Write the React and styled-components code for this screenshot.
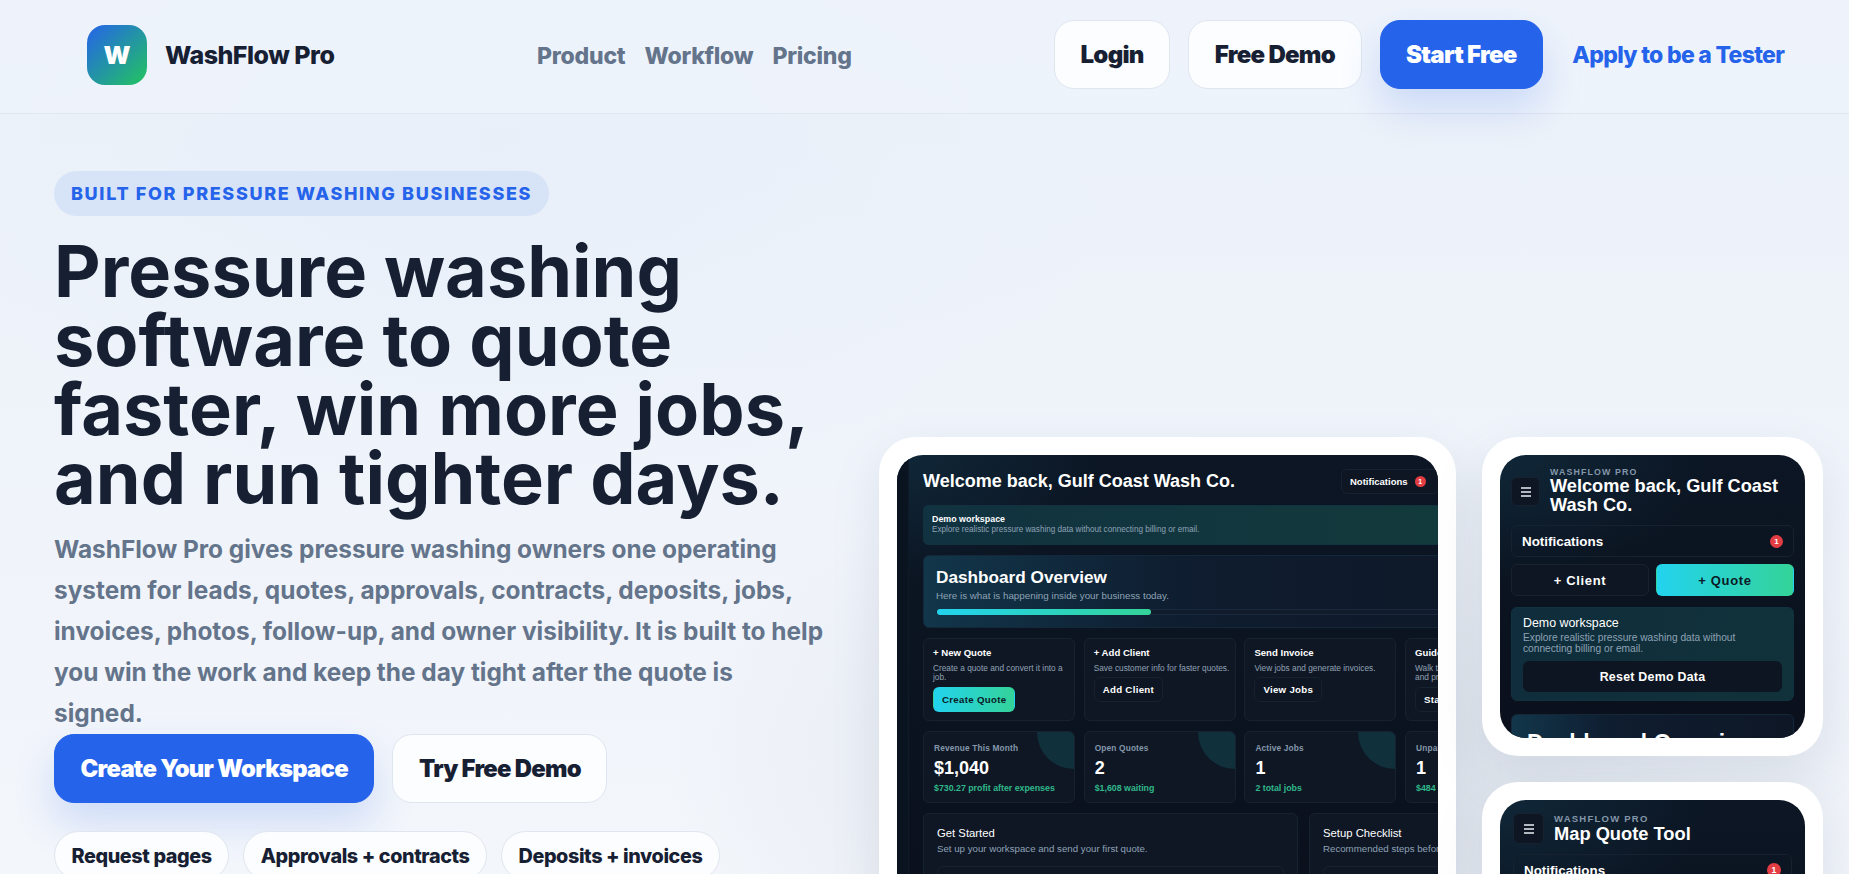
import * as React from 'react'
import styled, { createGlobalStyle } from 'styled-components'

const Global = createGlobalStyle`
  html, body { margin: 0; padding: 0; height: 100%; overflow: hidden; }
  body {
    font-family: Inter, "Noto Sans", sans-serif;
    background: #eef3f9;
    color: #172033;
  }
  * { box-sizing: border-box; }
`

const Page = styled.div`
  height: 874px;
  overflow: hidden;
  background:
    radial-gradient(900px 500px at 1300px 780px, rgba(200, 208, 220, 0.55), transparent 70%),
    radial-gradient(900px 500px at 500px 150px, rgba(215, 229, 250, 0.2), transparent 70%),
    linear-gradient(180deg, #ebf1f9 0%, #f3f6fb 100%);
`

const Header = styled.header`
  height: 114px;
  padding: 20px 64px 0 87px;
  display: flex;
  align-items: flex-start;
  border-bottom: 1px solid #dfe6ef;
  background: rgba(240, 245, 251, 0.6);
`

const Brand = styled.div`
  display: flex;
  align-items: center;
  gap: 18px;
  width: 450px;
  padding-top: 5px;
`

const LogoMark = styled.div`
  width: 60px;
  height: 60px;
  border-radius: 18px;
  background: linear-gradient(135deg, #2563eb, #22c55e);
  color: #fff;
  font-weight: 900;
  font-size: 25px;
  display: flex;
  align-items: center;
  justify-content: center;
`

const BrandName = styled.span`
  font-size: 25px;
  font-weight: 800;
  letter-spacing: -0.02em;
`

const Nav = styled.nav`
  display: flex;
  gap: 19px;
  width: 517px;
  padding-top: 22px;
`

const NavLink = styled.a`
  font-size: 23px;
  font-weight: 800;
  letter-spacing: -0.01em;
  color: #64748b;
`

const HeaderActions = styled.div`
  display: flex;
  align-items: center;
  gap: 18px;
`

const Button = styled.a`
  display: inline-flex;
  align-items: center;
  justify-content: center;
  height: 69px;
  padding: 0 25.5px;
  border-radius: 20px;
  font-size: ${p => (p.$large ? 23.8 : 24)}px;
  font-weight: 900;
  letter-spacing: -0.03em;
  white-space: nowrap;
  color: ${p => (p.$primary ? '#fff' : '#172033')};
  background: ${p => (p.$primary ? '#2563eb' : '#fbfdff')};
  border: 1px solid ${p => (p.$primary ? '#2563eb' : '#e0e6ef')};
  box-shadow: ${p => (p.$primary ? '0 20px 40px rgba(37, 99, 235, 0.18)' : 'none')};
`

const TesterLink = styled.a`
  margin-left: 11px;
  font-size: 23px;
  font-weight: 800;
  letter-spacing: -0.03em;
  color: #2563eb;
  white-space: nowrap;
`

const Hero = styled.main`
  display: grid;
  grid-template-columns: 825px 944px;
  padding: 57px 0 0 54px;
`

const Copy = styled.section`
  display: flex;
  flex-direction: column;
  align-items: flex-start;
`

const Eyebrow = styled.div`
  height: 45px;
  padding: 0 17px;
  display: flex;
  align-items: center;
  border-radius: 23px;
  background: #d7e3f7;
  color: #2563eb;
  font-size: 18px;
  font-weight: 800;
  letter-spacing: 0.092em;
`

const Title = styled.h1`
  margin: 20px 0 0;
  font-size: 72px;
  line-height: 69px;
  font-weight: 700;
  letter-spacing: 0;
  color: #172033;
`

const Lead = styled.p`
  margin: 17px 0 0;
  width: 770px;
  font-size: 24.4px;
  line-height: 41px;
  font-weight: 700;
  color: #64748b;
`

const CtaRow = styled.div`
  display: flex;
  gap: 18px;
`

const Chips = styled.div`
  display: flex;
  gap: 14px;
  margin-top: 28px;
`

const Chip = styled.span`
  height: 49px;
  padding: 0 16.5px;
  display: inline-flex;
  align-items: center;
  border-radius: 27px;
  background: #fbfdff;
  border: 1px solid #e0e6ef;
  font-size: 19.8px;
  font-weight: 800;
  letter-spacing: -0.02em;
  white-space: nowrap;
`

const Showcase = styled.section`
  display: grid;
  grid-template-columns: 577px 341px;
  gap: 26px;
  align-items: start;
  padding-top: 266px;
`

const PhoneColumn = styled.div`
  display: flex;
  flex-direction: column;
  gap: 26px;
`

const Frame = styled.div`
  background: #fff;
  border-radius: 36px;
  padding: 18px;
  box-shadow: 0 20px 50px rgba(100, 116, 139, 0.14);
`

const Screen = styled.div`
  height: ${p => p.$h}px;
  border-radius: 26px;
  overflow: hidden;
  color: #fff;
  font-family: "Liberation Sans", Arial, sans-serif;
  background:
    radial-gradient(260px 160px at 0 0, rgba(20, 60, 80, 0.45), transparent 80%),
    linear-gradient(180deg, #0c1624, #0a101c);
`

const DesktopShell = styled.div`
  display: flex;
  width: 700px;
`

const Rail = styled.div`
  width: 12px;
  height: 600px;
  background: #0a1420;
  border-right: 1px solid #0e1a28;
  margin-right: 14px;
  flex: none;
`

const DeskMain = styled.div`
  width: 640px;
  padding-top: 15px;
  flex: none;
`

const DeskTop = styled.div`
  width: 516px;
  height: 22px;
  display: flex;
  align-items: center;
  justify-content: space-between;
`

const DeskTitle = styled.div`
  font-size: 18px;
  font-weight: 700;
  white-space: nowrap;
`

const NotifPill = styled.div`
  width: 98px;
  height: 25px;
  padding-left: 8px;
  display: flex;
  align-items: center;
  gap: 7px;
  border: 1px solid #172231;
  border-radius: 6px;
  background: #0e1623;
  font-size: 9.5px;
  font-weight: 700;
  flex: none;
`

const Badge = styled.span`
  width: ${p => p.$size}px;
  height: ${p => p.$size}px;
  border-radius: 50%;
  background: #e23d42;
  color: #fff;
  font-size: ${p => p.$size * 0.62}px;
  font-weight: 700;
  display: inline-flex;
  align-items: center;
  justify-content: center;
  flex: none;
`

const DemoBanner = styled.div`
  margin-top: 13px;
  height: 40px;
  padding: 8px 8px;
  border-radius: 5px;
  border: 1px solid #123240;
  background: linear-gradient(90deg, #113240, #12383d 60%, #123a3a);
`

const DemoTitle = styled.div`
  font-size: 8.9px;
  font-weight: 700;
  line-height: 11px;
`

const DemoText = styled.div`
  font-size: 8.15px;
  line-height: 10px;
  color: #8ea2b5;
  white-space: nowrap;
`

const Overview = styled.div`
  margin-top: 10px;
  height: 73px;
  padding: 12px 12px;
  border-radius: 6px;
  border: 1px solid #14283a;
  background: linear-gradient(90deg, #12364a, #0f1d30 40%, #0e1726);
`

const OverviewTitle = styled.div`
  font-size: 17.2px;
  line-height: 19px;
  font-weight: 700;
  white-space: nowrap;
`

const OverviewText = styled.div`
  font-size: 9.8px;
  line-height: 13px;
  margin-top: 2px;
  color: #8ea2b5;
  white-space: nowrap;
`

const Track = styled.div`
  margin-top: 7px;
  height: 6px;
  border-radius: 3px;
  background: #101c2c;
  border: 1px solid #1a2a3c;
`

const Fill = styled.div`
  height: 6px;
  margin-top: -1px;
  border-radius: 3px;
  background: linear-gradient(90deg, #22d3ee, #34d399);
`

const TileGrid = styled.div`
  display: grid;
  grid-template-columns: repeat(4, 152px);
  gap: 10px 8.7px;
  margin-top: 10px;
`

const Tile = styled.div`
  position: relative;
  overflow: hidden;
  height: ${p => p.$h}px;
  padding: ${p => p.$pad};
  border: 1px solid #172231;
  border-radius: 6px;
  background: #0f1725;
`

const TileTitle = styled.div`
  font-size: 9.6px;
  line-height: 11px;
  font-weight: 700;
  white-space: nowrap;
`

const TileText = styled.div`
  font-size: 8.3px;
  line-height: 9.3px;
  margin-top: 6px;
  color: #91a2b4;
`

const TileButton = styled.div`
  display: inline-flex;
  align-items: center;
  height: 25px;
  padding: 0 8px;
  margin-top: 4px;
  border-radius: 6px;
  font-size: 9.7px;
  font-weight: 700;
  letter-spacing: 0.03em;
  white-space: nowrap;
  color: ${p => (p.$accent ? '#0b1a26' : '#fff')};
  background: ${p => (p.$accent ? 'linear-gradient(90deg, #22d3ee, #34d399)' : '#0e1623')};
  border: 1px solid ${p => (p.$accent ? 'transparent' : '#172231')};
`

const StatLabel = styled.div`
  font-size: 8.3px;
  line-height: 10px;
  font-weight: 700;
  letter-spacing: 0.02em;
  color: #8497aa;
  white-space: nowrap;
`

const StatValue = styled.div`
  font-size: 18px;
  line-height: 20px;
  margin-top: 5px;
  font-weight: 700;
`

const StatNote = styled.div`
  font-size: 8.8px;
  line-height: 10px;
  margin-top: 5px;
  font-weight: 700;
  color: #2fb98a;
  white-space: nowrap;
`

const Blob = styled.div`
  position: absolute;
  top: -37px;
  right: -37px;
  width: 74px;
  height: 74px;
  border-radius: 50%;
  background: #10303b;
`

const PanelRow = styled.div`
  display: grid;
  grid-template-columns: 375px 330px;
  gap: 11px;
  margin-top: 10px;
`

const Panel = styled.div`
  height: 120px;
  padding: 12px 13px;
  border: 1px solid #172231;
  border-radius: 6px;
  background: #0f1725;
`

const PanelTitle = styled.div`
  font-size: 11.3px;
  line-height: 14px;
  font-weight: 500;
`

const PanelText = styled.div`
  font-size: 9.7px;
  line-height: 12px;
  margin-top: 3px;
  color: #8ea2b5;
  white-space: nowrap;
`

const PanelBox = styled.div`
  position: relative;
  margin-top: 11px;
  height: 60px;
  border: 1px solid #172231;
  border-radius: 6px;
`

const PanelAction = styled.div`
  position: absolute;
  top: 8px;
  right: 13px;
  width: 58px;
  height: 24px;
  border-radius: 4px;
  background: #1f8f94;
`

const PhoneBody = styled.div`
  padding: ${p => p.$pad};
`

const PhoneHead = styled.div`
  display: flex;
  align-items: center;
  gap: 10px;
`

const MenuBox = styled.div`
  width: ${p => p.$size}px;
  height: ${p => p.$size}px;
  flex: none;
  border: 1px solid #172231;
  border-radius: 6px;
  background: #0e1623;
  display: flex;
  align-items: center;
  justify-content: center;
`

const Kicker = styled.div`
  font-size: ${p => p.$size}px;
  line-height: 9px;
  font-weight: 700;
  letter-spacing: 0.13em;
  color: #8497aa;
  white-space: nowrap;
`

const PhoneTitle = styled.div`
  font-size: ${p => p.$size}px;
  line-height: 19px;
  font-weight: 700;
  margin-top: ${p => p.$mt}px;
`

const NotifRow = styled.div`
  margin-top: ${p => p.$mt}px;
  height: 32px;
  padding: 0 10px;
  display: flex;
  align-items: center;
  justify-content: space-between;
  border: 1px solid #172231;
  border-radius: 6px;
  font-size: 13.4px;
  font-weight: 700;
`

const QuickRow = styled.div`
  display: grid;
  grid-template-columns: 1fr 1fr;
  gap: 7px;
  margin-top: 7px;
`

const QuickButton = styled.div`
  height: 32px;
  display: flex;
  align-items: center;
  justify-content: center;
  border-radius: 6px;
  font-size: 13px;
  font-weight: 700;
  letter-spacing: 0.05em;
  color: ${p => (p.$accent ? '#0b1a26' : '#fff')};
  background: ${p => (p.$accent ? 'linear-gradient(90deg, #22d3ee, #34d399)' : '#0e1623')};
  border: 1px solid ${p => (p.$accent ? 'transparent' : '#172231')};
`

const PhoneDemo = styled.div`
  margin-top: 11px;
  height: 94px;
  padding: 9px 11px;
  border-radius: 6px;
  border: 1px solid #123240;
  background: linear-gradient(100deg, #0f2d3c, #11323a);
`

const PhoneDemoTitle = styled.div`
  font-size: 12.4px;
  line-height: 13px;
  font-weight: 500;
`

const PhoneDemoText = styled.div`
  font-size: 10.2px;
  line-height: 11.2px;
  margin-top: 2px;
  color: #8ea2b5;
`

const ResetButton = styled.div`
  margin-top: 7px;
  height: 31px;
  display: flex;
  align-items: center;
  justify-content: center;
  border-radius: 6px;
  background: #0e1522;
  font-size: 12.4px;
  font-weight: 700;
  letter-spacing: 0.02em;
`

const PhoneOverview = styled.div`
  margin-top: 13px;
  height: 60px;
  padding: 16px 15px 0;
  border-radius: 6px;
  border: 1px solid #14283a;
  background: linear-gradient(90deg, #12364a, #0f1d30 35%, #0e1726);
  font-size: 23px;
  line-height: 24px;
  font-weight: 700;
  white-space: nowrap;
`

const Burger = () => (
  <svg width="12" height="12" viewBox="0 0 12 12" fill="none" stroke="#e8eef5" strokeWidth="1.4">
    <path d="M1 2h10M1 6h10M1 10h10" />
  </svg>
)

const tiles = [
  { title: '+ New Quote', text: 'Create a quote and convert it into a job.', btn: 'Create Quote', accent: true },
  { title: '+ Add Client', text: 'Save customer info for faster quotes.', btn: 'Add Client' },
  { title: 'Send Invoice', text: 'View jobs and generate invoices.', btn: 'View Jobs' },
  { title: 'Guided Setup', text: 'Walk through your business setup and pricing.', btn: 'Start' },
]

const stats = [
  { label: 'Revenue This Month', value: '$1,040', note: '$730.27 profit after expenses' },
  { label: 'Open Quotes', value: '2', note: '$1,608 waiting' },
  { label: 'Active Jobs', value: '1', note: '2 total jobs' },
  { label: 'Unpaid Invoices', value: '1', note: '$484 unpaid' },
]

export default function App() {
  return (
    <Page>
      <Global />
      <Header>
        <Brand>
          <LogoMark>W</LogoMark>
          <BrandName>WashFlow Pro</BrandName>
        </Brand>
        <Nav>
          <NavLink>Product</NavLink>
          <NavLink>Workflow</NavLink>
          <NavLink>Pricing</NavLink>
        </Nav>
        <HeaderActions>
          <Button>Login</Button>
          <Button>Free Demo</Button>
          <Button $primary>Start Free</Button>
          <TesterLink>Apply to be a Tester</TesterLink>
        </HeaderActions>
      </Header>
      <Hero>
        <Copy>
          <Eyebrow>BUILT FOR PRESSURE WASHING BUSINESSES</Eyebrow>
          <Title>
            Pressure washing<br />
            software to quote<br />
            faster, win more jobs,<br />
            and run tighter days.
          </Title>
          <Lead>
            WashFlow Pro gives pressure washing owners one operating system for leads, quotes,
            approvals, contracts, deposits, jobs, invoices, photos, follow-up, and owner visibility.
            It is built to help you win the work and keep the day tight after the quote is signed.
          </Lead>
          <CtaRow>
            <Button $primary $large>Create Your Workspace</Button>
            <Button $large>Try Free Demo</Button>
          </CtaRow>
          <Chips>
            <Chip>Request pages</Chip>
            <Chip>Approvals + contracts</Chip>
            <Chip>Deposits + invoices</Chip>
          </Chips>
        </Copy>
        <Showcase>
          <Frame>
            <Screen $h={500}>
              <DesktopShell>
                <Rail />
                <DeskMain>
                  <DeskTop>
                    <DeskTitle>Welcome back, Gulf Coast Wash Co.</DeskTitle>
                    <NotifPill>Notifications <Badge $size={11}>1</Badge></NotifPill>
                  </DeskTop>
                  <DemoBanner>
                    <DemoTitle>Demo workspace</DemoTitle>
                    <DemoText>Explore realistic pressure washing data without connecting billing or email.</DemoText>
                  </DemoBanner>
                  <Overview>
                    <OverviewTitle>Dashboard Overview</OverviewTitle>
                    <OverviewText>Here is what is happening inside your business today.</OverviewText>
                    <Track><Fill style={{ width: '35%' }} /></Track>
                  </Overview>
                  <TileGrid>
                    {tiles.map(t => (
                      <Tile key={t.title} $h={83} $pad="8px 4px 8px 9px">
                        <TileTitle>{t.title}</TileTitle>
                        <TileText>{t.text}</TileText>
                        <TileButton $accent={t.accent}>{t.btn}</TileButton>
                      </Tile>
                    ))}
                  </TileGrid>
                  <TileGrid>
                    {stats.map(s => (
                      <Tile key={s.label} $h={72} $pad="11px 10px">
                        <Blob />
                        <StatLabel>{s.label}</StatLabel>
                        <StatValue>{s.value}</StatValue>
                        <StatNote>{s.note}</StatNote>
                      </Tile>
                    ))}
                  </TileGrid>
                  <PanelRow>
                    <Panel>
                      <PanelTitle>Get Started</PanelTitle>
                      <PanelText>Set up your workspace and send your first quote.</PanelText>
                      <PanelBox><PanelAction /></PanelBox>
                    </Panel>
                    <Panel>
                      <PanelTitle>Setup Checklist</PanelTitle>
                      <PanelText>Recommended steps before going live.</PanelText>
                      <PanelBox />
                    </Panel>
                  </PanelRow>
                </DeskMain>
              </DesktopShell>
            </Screen>
          </Frame>
          <PhoneColumn>
            <Frame>
              <Screen $h={283}>
                <PhoneBody $pad="13px 11px 0">
                  <PhoneHead>
                    <MenuBox $size={29}><Burger /></MenuBox>
                    <div>
                      <Kicker $size={8.8}>WASHFLOW PRO</Kicker>
                      <PhoneTitle $size={18.2} $mt={0}>Welcome back, Gulf Coast Wash Co.</PhoneTitle>
                    </div>
                  </PhoneHead>
                  <NotifRow $mt={10}>Notifications <Badge $size={13}>1</Badge></NotifRow>
                  <QuickRow>
                    <QuickButton>+ Client</QuickButton>
                    <QuickButton $accent>+ Quote</QuickButton>
                  </QuickRow>
                  <PhoneDemo>
                    <PhoneDemoTitle>Demo workspace</PhoneDemoTitle>
                    <PhoneDemoText>Explore realistic pressure washing data without connecting billing or email.</PhoneDemoText>
                    <ResetButton>Reset Demo Data</ResetButton>
                  </PhoneDemo>
                  <PhoneOverview>Dashboard Overview</PhoneOverview>
                </PhoneBody>
              </Screen>
            </Frame>
            <Frame>
              <Screen $h={300}>
                <PhoneBody $pad="13px 13px 0">
                  <PhoneHead>
                    <MenuBox $size={31}><Burger /></MenuBox>
                    <div>
                      <Kicker $size={9.5}>WASHFLOW PRO</Kicker>
                      <PhoneTitle $size={18.3} $mt={1}>Map Quote Tool</PhoneTitle>
                    </div>
                  </PhoneHead>
                  <NotifRow $mt={10}>Notifications <Badge $size={14}>1</Badge></NotifRow>
                </PhoneBody>
              </Screen>
            </Frame>
          </PhoneColumn>
        </Showcase>
      </Hero>
    </Page>
  )
}
